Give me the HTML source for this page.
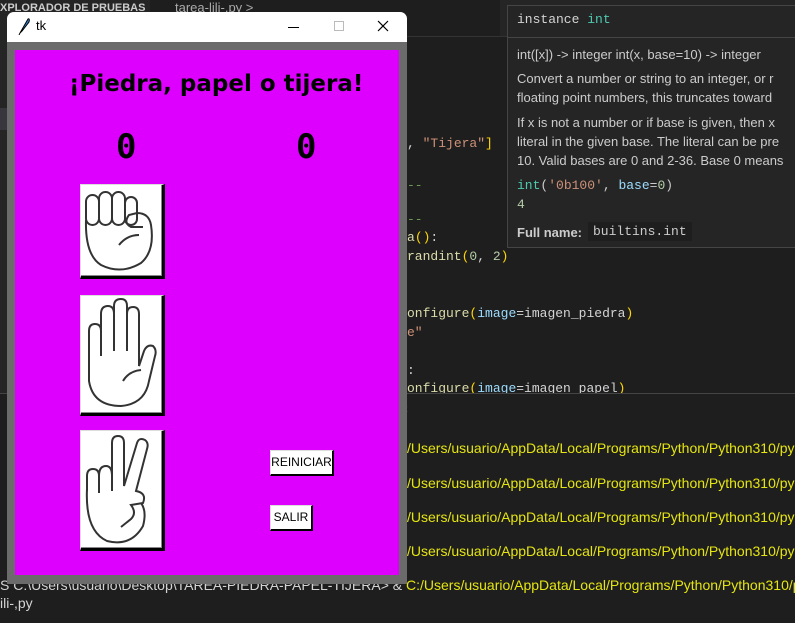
<!DOCTYPE html>
<html><head><meta charset="utf-8"><style>
*{margin:0;padding:0;box-sizing:border-box}
body{width:795px;height:623px;background:#1e1e1e;position:relative;overflow:hidden;font-family:"Liberation Sans",sans-serif}
.abs{position:absolute}
.mono{font-family:"Liberation Mono","DejaVu Sans Mono",monospace;font-size:13px;white-space:pre}
.code{color:#d4d4d4}
.y{color:#ffd700}.s{color:#ce9178}.b{color:#9cdcfe}.t{color:#dcdcaa}.g{color:#b5cea8}
.term{color:#d4d4d4;font-family:"Liberation Sans Narrow","Liberation Sans",sans-serif;font-size:14px;white-space:pre}
.ty{color:#e5e510}
.btnimg{position:absolute;background:#fff;border:1px solid #ddd;border-right:3px solid #000;border-bottom:3px solid #000;box-shadow:inset -1px -1px 0 #888}
.tb{position:absolute;background:#fff;border:1px solid #ddd;border-right:2px solid #000;border-bottom:2px solid #000;font-size:12px;font-family:"Liberation Sans Narrow","Liberation Sans",sans-serif;color:#000;text-align:center;line-height:22px}
</style></head><body>
<div class="abs" style="left:0;top:0;width:795px;height:36px;background:#252526"></div>
<div class="abs" style="left:0;top:0;width:500px;height:36px;background:#1e1e1e"></div>
<div class="abs" style="left:0;top:0;width:150px;height:623px;background:#252526"></div>
<div class="abs" style="left:0;top:0;font-size:11px;font-weight:bold;color:#ccc;top:2px;left:0">XPLORADOR DE PRUEBAS</div>
<div class="abs" style="left:175px;top:0px;font-size:13px;color:#aaa">tarea-lili-.py &gt;</div>
<div class="abs" style="left:407px;top:36px;width:100px;height:1px;background:#333"></div>
<div class="abs" style="left:0;top:393px;width:795px;height:1px;background:#444"></div>
<div class="abs" style="left:0;top:394px;width:795px;height:229px;background:#1e1e1e"></div>
<div class="abs" style="left:0;top:108px;width:10px;height:22px;background:#37373d"></div>

<div class="abs mono code" style="left:407px;top:136px">, <span class="s">"Tijera"</span><span class="y">]</span></div>
<div class="abs mono code" style="left:407px;top:178px;color:#6a9955">--</div>
<div class="abs mono code" style="left:407px;top:212px;color:#6a9955">--</div>
<div class="abs mono code" style="left:407px;top:230px"><span class="t">a</span><span class="y">()</span>:</div>
<div class="abs mono code" style="left:407px;top:249px"><span class="t">randint</span><span class="y">(</span><span class="g">0</span>, <span class="g">2</span><span class="y">)</span></div>
<div class="abs mono code" style="left:407px;top:306px"><span class="t">onfigure</span><span class="y">(</span><span class="b">image</span>=imagen_piedra<span class="y">)</span></div>
<div class="abs mono code" style="left:407px;top:325px"><span class="s">e"</span></div>
<div class="abs mono code" style="left:407px;top:363px">:</div>
<div class="abs mono code" style="left:407px;top:381px;height:12px;overflow:hidden"><span class="t">onfigure</span><span class="y">(</span><span class="b">image</span>=imagen_papel<span class="y">)</span></div>
<div class="abs" style="left:400px;top:403px;font-size:11px;color:#888">R</div>

<div class="abs term ty" style="left:407px;top:440px">/Users/usuario/AppData/Local/Programs/Python/Python310/py</div>
<div class="abs term ty" style="left:407px;top:475px">/Users/usuario/AppData/Local/Programs/Python/Python310/py</div>
<div class="abs term ty" style="left:407px;top:509px">/Users/usuario/AppData/Local/Programs/Python/Python310/py</div>
<div class="abs term ty" style="left:407px;top:543px">/Users/usuario/AppData/Local/Programs/Python/Python310/py</div>
<div class="abs term" style="left:0;top:577px">S C:\Users\usuario\Desktop\TAREA-PIEDRA-PAPEL-TIJERA&gt; &amp; <span class="ty">C:/Users/usuario/AppData/Local/Programs/Python/Python310/py</span></div>
<div class="abs term" style="left:0;top:595px">ili-,py</div>

<div class="abs" style="left:507px;top:5px;width:300px;height:243px;background:#252526;border:1px solid #454545">
 <div class="mono" style="position:absolute;left:9px;top:6px;font-size:13px;color:#d4d4d4">instance <span style="color:#4ec9b0">int</span></div>
 <div style="position:absolute;left:0;top:31px;width:300px;height:1px;background:#454545"></div>
 <div style="position:absolute;left:9px;top:39px;font-size:13px;color:#ccc;white-space:nowrap;line-height:20px">int([x]) -&gt; integer int(x, base=10) -&gt; integer</div>
 <div style="position:absolute;left:9px;top:63px;font-size:13px;color:#ccc;white-space:nowrap;line-height:19px">Convert a number or string to an integer, or r<br>floating point numbers, this truncates toward</div>
 <div style="position:absolute;left:9px;top:107px;font-size:13px;color:#ccc;white-space:nowrap;line-height:19px">If x is not a number or if base is given, then x<br>literal in the given base. The literal can be pre<br>10. Valid bases are 0 and 2-36. Base 0 means</div>
 <div class="mono" style="position:absolute;left:9px;top:172px;color:#4ec9b0"><span style="color:#4ec9b0">int</span><span style="color:#ccc">(</span><span class="s">'0b100'</span><span style="color:#ccc">, </span><span class="b">base</span><span style="color:#ccc">=</span><span class="g">0</span><span style="color:#ccc">)</span></div>
 <div class="mono" style="position:absolute;left:9px;top:191px;color:#b5cea8">4</div>
 <div style="position:absolute;left:9px;top:219px;font-size:13px;color:#ccc;font-weight:bold">Full name:</div>
 <div class="mono" style="position:absolute;left:80px;top:216px;background:#1e1e1e;padding:2px 5px;color:#ccc">builtins.int</div>
</div>

<div class="abs" style="left:7px;top:12px;width:400px;height:572px;background:#6b6b6b;border-radius:7px 7px 0 0;overflow:hidden">
 <div style="position:absolute;left:0;top:0;width:400px;height:30px;background:#fff"></div>
 <svg style="position:absolute;left:10px;top:5px" width="14" height="18" viewBox="0 0 14 18"><path d="M3 16 L11 2 Q13 1 12 5 L5 14 Z" fill="#2a7fd0" stroke="#000" stroke-width="1"/><path d="M3 16 L2 18" stroke="#000"/></svg>
 <div style="position:absolute;left:29px;top:6px;font-size:13px;color:#000">tk</div>
 <div style="position:absolute;left:281px;top:15px;width:11px;height:1px;background:#000"></div>
 <div style="position:absolute;left:327px;top:9px;width:10px;height:10px;border:1px solid #bbb"></div>
 <svg style="position:absolute;left:370px;top:8px" width="12" height="12"><path d="M1 1L11 11M11 1L1 11" stroke="#000" stroke-width="1.2"/></svg>
 <div style="position:absolute;left:8px;top:38px;width:384px;height:525px;background:#dd00ff"></div>
</div>

<div class="abs" style="left:69px;top:71px;font-family:'DejaVu Sans',sans-serif;font-weight:bold;font-size:23px;color:#000;white-space:nowrap">¡Piedra, papel o tijera!</div>
<div class="abs" style="left:116px;top:127px;font-family:'DejaVu Sans Mono',monospace;font-weight:bold;font-size:34px;color:#000">0</div>
<div class="abs" style="left:296px;top:127px;font-family:'DejaVu Sans Mono',monospace;font-weight:bold;font-size:34px;color:#000">0</div>

<div class="btnimg" style="left:80px;top:184px;width:85px;height:95px">
<svg width="80" height="90" viewBox="0 0 80 90" fill="none" stroke="#333" stroke-width="2">
<rect x="5" y="10" width="13" height="30" rx="6.5"/><rect x="18" y="7" width="13" height="33" rx="6.5"/><rect x="31" y="7" width="13" height="33" rx="6.5"/><rect x="44" y="12" width="12" height="28" rx="6"/>
<path d="M5 35 Q4 70 20 80 Q40 90 60 78 Q74 66 70 40 Q68 28 56 28 L48 30 Q42 38 50 42 L62 42"/>
<path d="M38 60 Q46 50 58 50"/>
</svg></div>
<div class="btnimg" style="left:80px;top:295px;width:85px;height:121px">
<svg width="80" height="116" viewBox="0 0 80 116" fill="none" stroke="#333" stroke-width="2">
<path d="M8 68 L8 35 Q8 28 14 28 Q20 28 20 35 L20 60 L20 18 Q20 10 27 10 Q33 10 33 18 L33 55 L33 10 Q33 3 40 3 Q46 3 46 10 L46 55 L46 18 Q46 11 52 11 Q58 11 58 18 L58 70 L63 55 Q66 48 72 50 Q76 54 74 60 L68 85 Q64 108 40 110 Q12 110 8 85 Z"/>
<path d="M42 85 Q48 75 60 74"/>
</svg></div>
<div class="btnimg" style="left:80px;top:430px;width:85px;height:121px">
<svg width="80" height="116" viewBox="0 0 80 116" fill="none" stroke="#333" stroke-width="2">
<path d="M6 60 L6 45 Q6 38 12 38 Q18 38 18 45 L18 62 M18 45 Q18 35 25 35 Q31 35 31 45 L31 60 L31 12 Q31 5 37 5 Q43 5 43 12 L43 55 L56 12 Q58 6 64 9 Q68 12 66 18 L55 60 Q66 62 62 72 L50 74 Q56 82 50 88 L40 96"/>
<path d="M6 58 Q4 100 26 110 Q50 116 62 95 Q66 80 60 72"/>
</svg></div>

<div class="tb" style="left:270px;top:450px;width:64px;height:26px">REINICIAR</div>
<div class="tb" style="left:270px;top:505px;width:43px;height:26px">SALIR</div>
</body></html>
